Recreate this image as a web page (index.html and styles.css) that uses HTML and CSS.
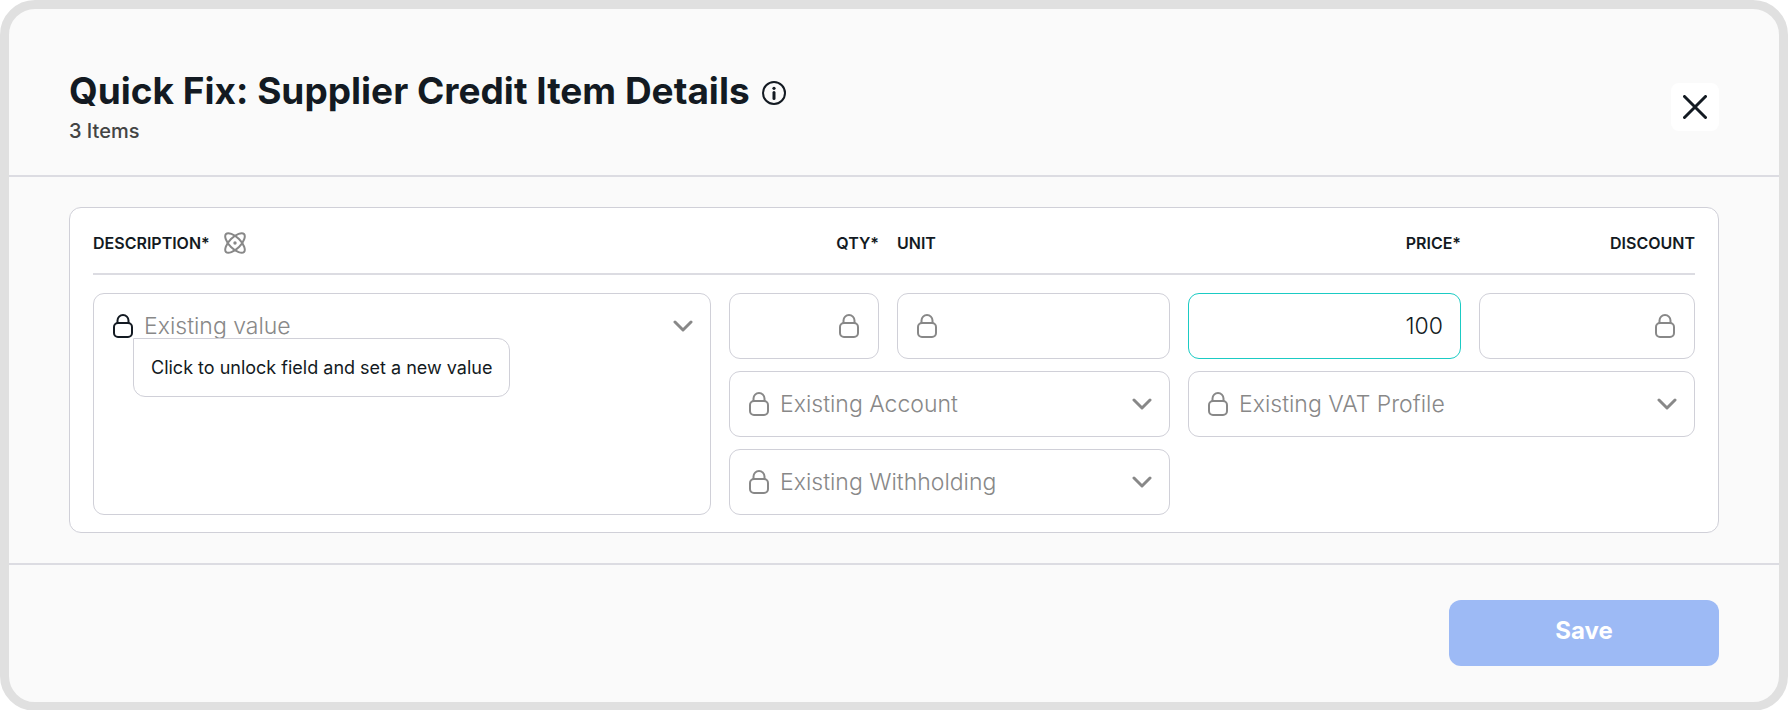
FILE: index.html
```html
<!DOCTYPE html>
<html lang="en">
<head>
<meta charset="UTF-8">
<meta name="viewport" content="width=device-width, initial-scale=1.0">
<title>Quick Fix: Supplier Credit Item Details</title>
<link rel="stylesheet" href="styles.css">
</head>
<body>

<!-- Shared icons -->
<svg class="sprite" aria-hidden="true">
    <symbol id="icon-lock" viewBox="0 0 20 24">
        <rect x="1" y="9" width="18" height="14" rx="4"/>
        <path d="M4.500 9V6.500a5.500 5.500 0 0 1 11 0V9"/>
    </symbol>
    <symbol id="icon-chevron" viewBox="0 0 20 12">
        <path d="M2 2l8 8 8-8"/>
    </symbol>
</svg>

<div class="modal" role="dialog" aria-labelledby="modal-title">
    <header class="modal-header">
        <div class="modal-heading">
            <div class="title-row">
                <h1 id="modal-title">Quick Fix: Supplier Credit Item Details</h1>
                <button type="button" class="icon-btn info-btn" aria-label="More information">
                    <svg class="info-icon" viewBox="0 0 24 24">
                        <circle cx="12" cy="12" r="11"/>
                        <path class="stem" d="M12 11.5v6"/>
                        <circle class="dot" cx="12" cy="7.3" r="1.6"/>
                    </svg>
                </button>
            </div>
            <p class="subtitle">3 Items</p>
        </div>
        <button type="button" class="close-button" aria-label="Close">
            <svg class="close-icon" viewBox="0 0 24 24"><path d="M1.5 1.5l21 21M22.5 1.5l-21 21"/></svg>
        </button>
    </header>

    <form id="quick-fix-form" class="modal-body">
        <div class="card">
            <div class="grid labels">
                <div class="label-cell">
                    <label for="description">DESCRIPTION*</label>
                    <svg class="atom-icon" viewBox="0 0 22 22" aria-hidden="true">
                        <path d="M2 2C4 0 10 2 15 7S22 18 20 20 12 20 7 15 0 4 2 2z"/>
                        <path d="M20 2C22 4 20 10 15 15S4 22 2 20 2 12 7 7 18 0 20 2z"/>
                        <circle class="dot" cx="11" cy="11" r="1.7"/>
                    </svg>
                </div>
                <label for="qty" class="right">QTY*</label>
                <label for="unit">UNIT</label>
                <label for="price" class="right">PRICE*</label>
                <label for="discount" class="right">DISCOUNT</label>
            </div>

            <div class="grid fields">
                <div class="field field-description">
                    <button type="button" class="icon-btn lock-btn active" aria-label="Unlock description" aria-describedby="unlock-tip">
                        <svg class="lock"><use href="#icon-lock"/></svg>
                        <span class="tooltip" id="unlock-tip" role="tooltip">Click to unlock field and set a new value</span>
                    </button>
                    <textarea id="description" name="description" placeholder="Existing value" readonly></textarea>
                    <svg class="chevron"><use href="#icon-chevron"/></svg>
                </div>

                <div class="field">
                    <input type="text" id="qty" name="qty" readonly>
                    <button type="button" class="icon-btn lock-btn" aria-label="Unlock quantity"><svg class="lock"><use href="#icon-lock"/></svg></button>
                </div>
                <div class="field">
                    <button type="button" class="icon-btn lock-btn" aria-label="Unlock unit"><svg class="lock"><use href="#icon-lock"/></svg></button>
                    <input type="text" id="unit" name="unit" readonly>
                </div>
                <div class="field field-active">
                    <input type="text" id="price" name="price" class="right" value="100">
                </div>
                <div class="field">
                    <input type="text" id="discount" name="discount" readonly>
                    <button type="button" class="icon-btn lock-btn" aria-label="Unlock discount"><svg class="lock"><use href="#icon-lock"/></svg></button>
                </div>

                <div class="field field-wide">
                    <button type="button" class="icon-btn lock-btn" aria-label="Unlock account"><svg class="lock"><use href="#icon-lock"/></svg></button>
                    <select name="account" aria-label="Account"><option>Existing Account</option></select>
                    <svg class="chevron"><use href="#icon-chevron"/></svg>
                </div>
                <div class="field field-wide">
                    <button type="button" class="icon-btn lock-btn" aria-label="Unlock VAT profile"><svg class="lock"><use href="#icon-lock"/></svg></button>
                    <select name="vat" aria-label="VAT profile"><option>Existing VAT Profile</option></select>
                    <svg class="chevron"><use href="#icon-chevron"/></svg>
                </div>
                <div class="field field-wide">
                    <button type="button" class="icon-btn lock-btn" aria-label="Unlock withholding"><svg class="lock"><use href="#icon-lock"/></svg></button>
                    <select name="withholding" aria-label="Withholding"><option>Existing Withholding</option></select>
                    <svg class="chevron"><use href="#icon-chevron"/></svg>
                </div>
            </div>
        </div>
    </form>

    <footer class="modal-footer">
        <button type="submit" form="quick-fix-form" class="btn" disabled>Save</button>
    </footer>
</div>

</body>
</html>
```
FILE: styles.css
```css
* {
    box-sizing: border-box;
}

body {
    margin: 0;
    background-color: #fff;
    color: #131a22;
    font-family: Inter, sans-serif;
}

button,
input,
select,
textarea {
    font: inherit;
    color: inherit;
}

svg {
    display: block;
    flex: none;
    fill: none;
    stroke: currentColor;
    stroke-linecap: round;
    stroke-linejoin: round;
    stroke-width: 2;
}

svg .dot {
    fill: currentColor;
    stroke: none;
}

.sprite {
    position: absolute;
    width: 0;
    height: 0;
}

.modal {
    border: 9px solid #e0e0e0;
    border-radius: 35px;
    background-color: #fafafa;
}

/* Header */
.modal-header {
    display: flex;
    justify-content: space-between;
    align-items: center;
    padding: 56px 60px 30px;
    border-bottom: 2px solid #dcdce2;
}

.title-row {
    display: flex;
    align-items: center;
    gap: 12px;
}

h1 {
    margin: 0;
    font-size: 37px;
    font-weight: 660;
    line-height: 52px;
}

.subtitle {
    margin: 0;
    color: #444;
    font-size: 20px;
    font-weight: 500;
    line-height: 28px;
}

.icon-btn {
    display: block;
    padding: 0;
    border: none;
    background: none;
    cursor: pointer;
}

.info-btn {
    padding-top: 4px;
}

.info-icon {
    width: 24px;
    height: 24px;
}

.info-icon .stem {
    stroke-width: 3;
}

.close-button {
    margin-top: 4px;
    padding: 12px;
    border: none;
    border-radius: 8px;
    background-color: #fff;
    cursor: pointer;
}

.close-icon {
    width: 24px;
    height: 24px;
    stroke-width: 3;
}

/* Item card */
.modal-body {
    padding: 30px 60px;
}

.card {
    padding: 0 23px 17px;
    border: 1px solid #d0d0d8;
    border-radius: 12px;
    background-color: #fff;
}

.grid {
    display: grid;
    grid-template-columns: 206fr 50fr 91fr 91fr 72fr;
    gap: 12px 18px;
}

.labels {
    align-items: center;
    height: 67px;
    padding-top: 4px;
    border-bottom: 2px solid #dcdce2;
    font-size: 16px;
    font-weight: 600;
}

.label-cell {
    display: flex;
    align-items: center;
    gap: 14px;
}

.right {
    text-align: right;
}

.atom-icon {
    width: 22px;
    height: 22px;
    color: #888;
}

.fields {
    grid-auto-rows: 66px;
    padding-top: 18px;
}

.field {
    display: flex;
    align-items: center;
    gap: 10px;
    min-width: 0;
    padding: 0 17px;
    border: 1px solid #d0d0d8;
    border-radius: 11px;
    background-color: #fff;
    color: #888;
    font-size: 23px;
    font-weight: 350;
    line-height: 30px;
}

.field-description {
    grid-row: span 3;
    align-items: flex-start;
    padding-top: 17px;
}

.field-wide {
    grid-column: span 2;
}

.field-active {
    border-color: #1bcbc4;
    color: #131a22;
}

.field input,
.field select,
.field textarea {
    flex: 1;
    min-width: 0;
    height: 30px;
    padding: 0;
    border: none;
    outline: none;
    background: none;
    appearance: none;
}

.field textarea {
    align-self: stretch;
    height: auto;
    resize: none;
}

.field textarea::placeholder {
    color: #888;
}

.lock {
    width: 20px;
    height: 24px;
}

.chevron {
    width: 20px;
    height: 12px;
    stroke-width: 3;
}

.lock-btn {
    position: relative;
    margin: 0 1px 0 2px;
    color: #888;
}

.field input + .lock-btn {
    margin-right: 2px;
}

.lock-btn.active {
    color: #131a22;
}

.field-description .lock-btn {
    padding-top: 3px;
}

.field-description .chevron {
    margin-top: 9px;
}

.tooltip {
    position: absolute;
    top: 100%;
    left: 100%;
    padding: 14px 17px 13px;
    border: 1px solid #d0d0d8;
    border-radius: 0 12px 12px 12px;
    background-color: #fff;
    font-size: 18px;
    font-weight: 400;
    white-space: nowrap;
}

/* Footer */
.modal-footer {
    display: flex;
    justify-content: flex-end;
    padding: 35px 60px 36px;
    border-top: 2px solid #dcdce2;
}

.btn {
    width: 270px;
    height: 66px;
    padding: 0 0 6px;
    border: none;
    border-radius: 12px;
    background-color: #9dbaf5;
    color: #fff;
    font-size: 24px;
    font-weight: 700;
}
```
